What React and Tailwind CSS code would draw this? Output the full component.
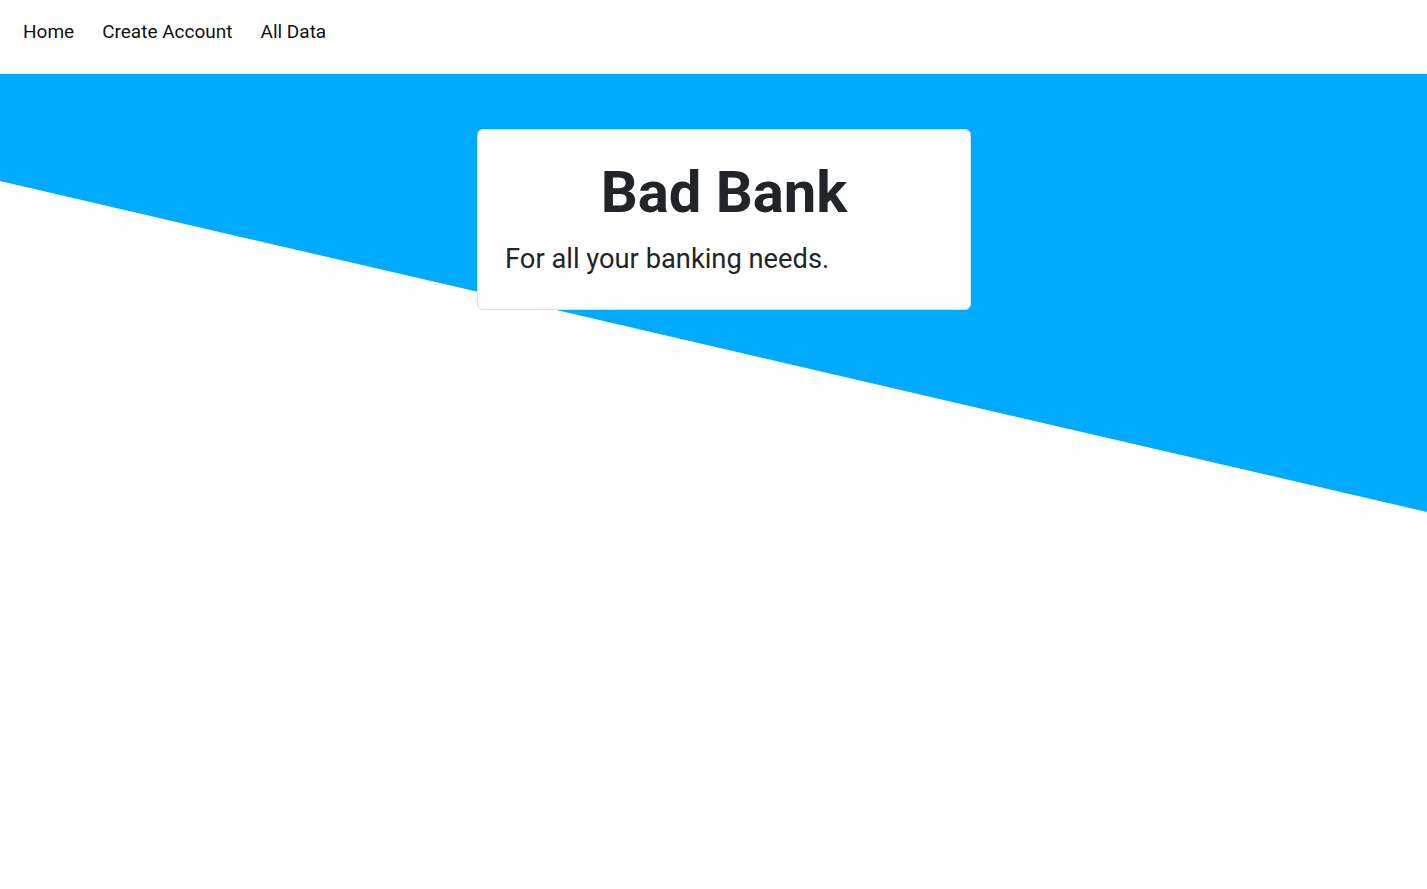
import React from 'react';

function NavBar() {
  const links = ['Home', 'Create Account', 'All Data'];
  return (
    <nav className="h-[74px] flex items-start pt-[22px] px-[9px] bg-white">
      {links.map((label) => (
        <a key={label} href="#" className="px-[14px] text-[19px] text-[#111] leading-none">
          {label}
        </a>
      ))}
    </nav>
  );
}

function App() {
  return (
    <div className="min-h-[889px] bg-white font-['Roboto',sans-serif] text-[#212529]">
      <NavBar />
      <main className="relative">
        <svg className="absolute left-0 top-0 w-full h-[438px]" viewBox="0 0 1427 438" preserveAspectRatio="none">
          <polygon points="0,0 1427,0 1427,438 0,107" fill="#00aaff" />
        </svg>
        <div className="relative flex justify-center pl-[21px] pt-[55px]">
          <div className="w-[494px] h-[181px] bg-white border border-[#dcdfe3] rounded-[6px] px-[27px] pt-[33px]">
            <h1 className="text-center text-[58px] font-bold leading-none">Bad Bank</h1>
            <p className="mt-[25px] text-[27.3px] leading-none">For all your banking needs.</p>
          </div>
        </div>
      </main>
    </div>
  );
}

export default App;
